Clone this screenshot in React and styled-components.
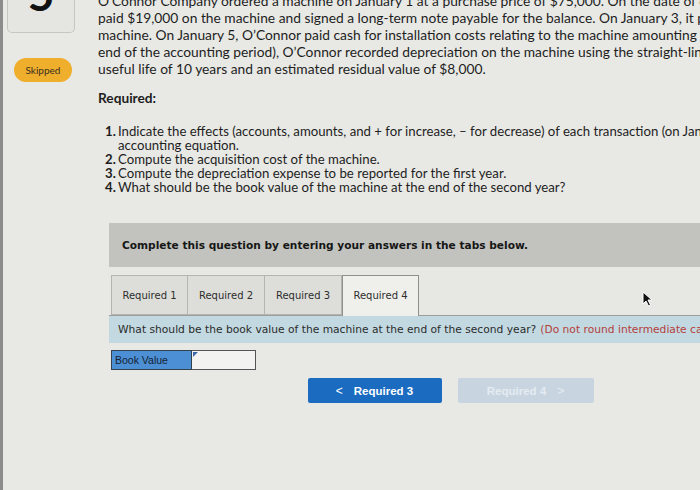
import React from "react"
import styled, { createGlobalStyle } from "styled-components"

const GlobalStyle = createGlobalStyle`
  html, body {
    margin: 0;
    padding: 0;
    background: #e8e9e5;
    overflow: hidden;
  }
`

const Page = styled.div`
  position: relative;
  display: flex;
  width: 700px;
  height: 490px;
  overflow: hidden;
  border-left: 3px solid #8c8d8a;
  box-sizing: border-box;
  background: #e8e9e5;
  font-family: Lato, "Open Sans", sans-serif;
  color: #1e1e1e;
`

const Sidebar = styled.div`
  width: 95px;
  flex-shrink: 0;
  display: flex;
  flex-direction: column;
  padding-left: 4px;
  box-sizing: border-box;
`

const NumberCard = styled.div`
  width: 68px;
  height: 33px;
  box-sizing: border-box;
  border: 1px solid #c6c7c3;
  border-top: none;
  border-radius: 0 0 5px 5px;
  background: #e5e6e2;
  display: flex;
  justify-content: center;
  align-items: flex-end;
  overflow: hidden;
`

const Numeral = styled.span`
  font-family: Lato, sans-serif;
  font-weight: 700;
  font-size: 46px;
  line-height: 1;
  color: #111;
  margin-bottom: 15px;
`

const StatusPill = styled.div`
  margin: 25px 0 0 7px;
  width: 58px;
  height: 24px;
  border-radius: 12px;
  background: #efae2b;
  color: #3a3022;
  font-size: 10px;
  display: flex;
  align-items: center;
  justify-content: center;
`

const Main = styled.div`
  flex: 1;
  min-width: 0;
  margin-top: -8px;
`

const Line = styled.div`
  font-size: 13.8px;
  line-height: 17px;
  white-space: nowrap;
`

const Heading = styled.div`
  margin-top: 12px;
  font-size: 13.7px;
  line-height: 17px;
  font-weight: 700;
`

const List = styled.div`
  margin-top: 18px;
  padding-left: 7px;
  display: flex;
  flex-direction: column;
`

const Item = styled.div`
  display: grid;
  grid-template-columns: 13px 1fr;
  font-size: 13.2px;
  line-height: 14px;
`

const ItemNum = styled.span`
  font-weight: 700;
`

const ItemText = styled.span`
  white-space: nowrap;
`

const QuestionBox = styled.div`
  margin: 29px 0 0 11px;
  width: 683px;
  font-family: "DejaVu Sans", Verdana, sans-serif;
`

const BoxHeader = styled.div`
  height: 44px;
  background: #c2c3be;
  padding-left: 13px;
  display: flex;
  align-items: center;
  font-size: 10.6px;
  font-weight: 700;
  color: #161616;
`

const TabStrip = styled.div`
  display: flex;
  padding: 8px 0 0 2px;
  background: #e7e8e4;
  border-bottom: 1px solid #9d9e9a;
`

const Tab = styled.div`
  width: 77px;
  box-sizing: border-box;
  border: 1px solid ${(p) => (p.$active ? "#8f908c" : "#b4b5b1")};
  border-left-width: ${(p) => (p.$first || p.$active ? "1px" : "0")};
  border-bottom: ${(p) => (p.$active ? "none" : "1px solid #b4b5b1")};
  background: ${(p) => (p.$active ? "#eff0ec" : "#dddeda")};
  margin-bottom: ${(p) => (p.$active ? "-1px" : "0")};
  height: ${(p) => (p.$active ? "41px" : "40px")};
  padding-bottom: ${(p) => (p.$active ? "1px" : "0")};
  display: flex;
  align-items: center;
  justify-content: center;
  font-size: 10px;
  color: #2d2d2d;
`

const InfoBar = styled.div`
  height: 27px;
  background: #c2d9e1;
  padding-left: 9px;
  display: flex;
  align-items: center;
  font-size: 10.7px;
  color: #2b2b2b;
  white-space: nowrap;
  overflow: hidden;
`

const Hint = styled.span`
  color: #b5403c;
  margin-left: 4px;
`

const AnswerRow = styled.div`
  display: flex;
  margin: 7px 0 0 2px;
`

const AnswerLabel = styled.div`
  width: 81px;
  height: 20px;
  box-sizing: border-box;
  border: 1px solid #34424f;
  background: #4c8fd4;
  padding-left: 3px;
  display: flex;
  align-items: center;
  font-family: "Liberation Sans", Arial, sans-serif;
  font-size: 10.5px;
  color: #142233;
`

const AnswerInput = styled.div`
  position: relative;
  width: 64px;
  height: 20px;
  box-sizing: border-box;
  border: 1px solid #555;
  border-left: none;
  background: #f3f4f1;

  &::before {
    content: "";
    position: absolute;
    left: 1px;
    top: 1px;
    border-top: 5px solid #3c6aa8;
    border-right: 5px solid transparent;
  }
`

const NavRow = styled.div`
  display: flex;
  justify-content: center;
  gap: 16px;
  margin-top: 8px;
`

const NavButton = styled.div`
  width: ${(p) => p.$w}px;
  height: 25px;
  border-radius: 2px;
  background: ${(p) => (p.$disabled ? "#c8d5e0" : "#1b6bc1")};
  color: ${(p) => (p.$disabled ? "#e4ebf1" : "#ffffff")};
  display: flex;
  align-items: center;
  justify-content: center;
  gap: 11px;
  font-family: "Liberation Sans", Arial, sans-serif;
  font-weight: 700;
  font-size: 11.5px;
`

const Chevron = styled.span`
  font-size: 12px;
  font-weight: 400;
`

const Cursor = styled.svg`
  position: absolute;
  left: 639px;
  top: 291px;
`

export default function App() {
  return (
    <>
      <GlobalStyle />
      <Page>
        <Sidebar>
          <NumberCard>
            <Numeral>5</Numeral>
          </NumberCard>
          <StatusPill>Skipped</StatusPill>
        </Sidebar>
        <Main>
          <Line>O’Connor Company ordered a machine on January 1 at a purchase price of $75,000. On the date of delivery, January 2, the company</Line>
          <Line>paid $19,000 on the machine and signed a long-term note payable for the balance. On January 3, it paid $750 for freight on the</Line>
          <Line>machine. On January 5, O’Connor paid cash for installation costs relating to the machine amounting to $2,400. On December 31 (the</Line>
          <Line>end of the accounting period), O’Connor recorded depreciation on the machine using the straight-line method with an estimated</Line>
          <Line>useful life of 10 years and an estimated residual value of $8,000.</Line>
          <Heading>Required:</Heading>
          <List>
            <Item>
              <ItemNum>1.</ItemNum>
              <ItemText>Indicate the effects (accounts, amounts, and + for increase, – for decrease) of each transaction (on January 1, 2, 3, and 5) on the</ItemText>
            </Item>
            <Item>
              <span />
              <ItemText>accounting equation.</ItemText>
            </Item>
            <Item>
              <ItemNum>2.</ItemNum>
              <ItemText>Compute the acquisition cost of the machine.</ItemText>
            </Item>
            <Item>
              <ItemNum>3.</ItemNum>
              <ItemText>Compute the depreciation expense to be reported for the first year.</ItemText>
            </Item>
            <Item>
              <ItemNum>4.</ItemNum>
              <ItemText>What should be the book value of the machine at the end of the second year?</ItemText>
            </Item>
          </List>
          <QuestionBox>
            <BoxHeader>Complete this question by entering your answers in the tabs below.</BoxHeader>
            <TabStrip>
              <Tab $first>Required 1</Tab>
              <Tab>Required 2</Tab>
              <Tab>Required 3</Tab>
              <Tab $active>Required 4</Tab>
            </TabStrip>
            <InfoBar>
              What should be the book value of the machine at the end of the second year?
              <Hint>(Do not round intermediate calculations.)</Hint>
            </InfoBar>
            <AnswerRow>
              <AnswerLabel>Book Value</AnswerLabel>
              <AnswerInput />
            </AnswerRow>
            <NavRow>
              <NavButton $w={134}>
                <Chevron>&lt;</Chevron>
                Required 3
              </NavButton>
              <NavButton $w={136} $disabled>
                Required 4
                <Chevron>&gt;</Chevron>
              </NavButton>
            </NavRow>
          </QuestionBox>
        </Main>
        <Cursor width="11" height="16" viewBox="0 0 11 16">
          <path d="M1 1 L1 13 L4 10 L6.5 15 L8.5 14 L6 9 L10 9 Z" fill="#111" stroke="#fff" strokeWidth="1" />
        </Cursor>
      </Page>
    </>
  )
}
